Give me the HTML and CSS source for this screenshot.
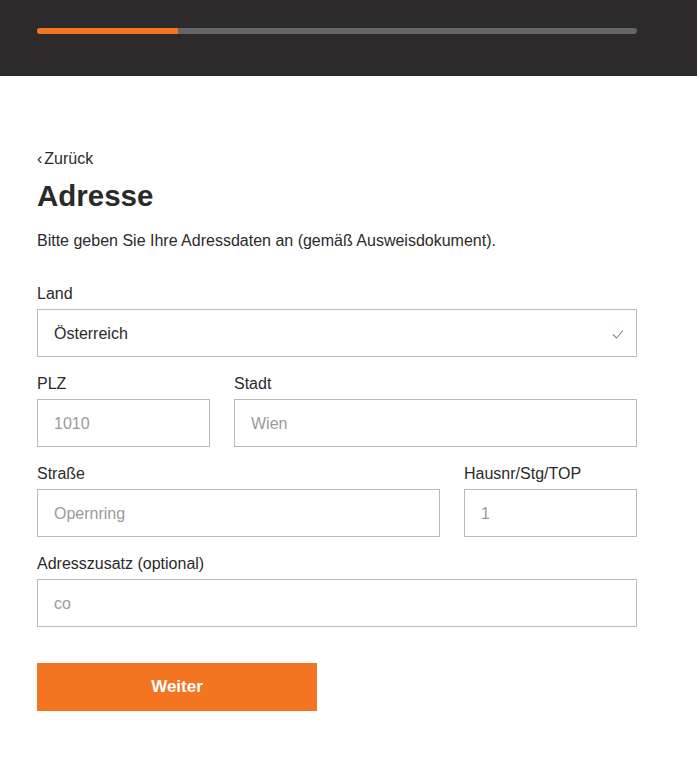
FILE: index.html
```html
<!DOCTYPE html>
<html lang="de">
<head>
<meta charset="utf-8">
<title>Adresse</title>
<link rel="stylesheet" href="styles.css">
</head>
<body>
<header class="topbar">
  <div class="progress"><div class="progress-fill" style="width:23.5%"></div></div>
</header>
<main class="content">
  <a class="back" href="#"><span class="chev">‹</span>Zurück</a>
  <h1 class="title">Adresse</h1>
  <p class="intro">Bitte geben Sie Ihre Adressdaten an (gemäß Ausweisdokument).</p>
  <form class="form">
    <div class="field">
      <label class="label">Land</label>
      <div class="input select">
        <span class="value">Österreich</span>
        <svg class="check" width="12" height="10" viewBox="0 0 12 10"><path d="M1 5.5 L4.5 9 L11 1.5" fill="none" stroke="#6a9a7a" stroke-width="1.1"/></svg>
      </div>
    </div>
    <div class="row row-a">
      <div class="field">
        <label class="label">PLZ</label>
        <div class="input"><span class="ph">1010</span></div>
      </div>
      <div class="field">
        <label class="label">Stadt</label>
        <div class="input"><span class="ph">Wien</span></div>
      </div>
    </div>
    <div class="row row-b">
      <div class="field">
        <label class="label">Straße</label>
        <div class="input"><span class="ph">Opernring</span></div>
      </div>
      <div class="field">
        <label class="label">Hausnr/Stg/TOP</label>
        <div class="input"><span class="ph">1</span></div>
      </div>
    </div>
    <div class="field">
      <label class="label">Adresszusatz (optional)</label>
      <div class="input"><span class="ph">co</span></div>
    </div>
    <button class="btn" type="button">Weiter</button>
  </form>
</main>
</body>
</html>
```

FILE: styles.css
```css
* { box-sizing: border-box; }
html, body { margin: 0; padding: 0; background: #fff; }
body {
  font-family: "Liberation Sans", Arial, sans-serif;
  color: #2b2a2b;
  width: 697px;
}
.topbar {
  background: #2c2a2b;
  height: 76px;
  padding: 28px 60px 0 37px;
}
.progress {
  height: 6px;
  background: #666566;
  border-radius: 3px;
  overflow: hidden;
}
.progress-fill {
  height: 100%;
  background: #f47521;
}
.content {
  padding: 73px 60px 0 37px;
}
.back {
  display: block;
  font-size: 16px;
  line-height: 20px;
  color: #2b2a2b;
  text-decoration: none;
}
.chev { font-size: 16px; margin-right: 2px; }
.title {
  margin: 10px 0 0;
  font-size: 29.5px;
  line-height: 34px;
  font-weight: bold;
  color: #2b2a2b;
}
.intro {
  margin: 18px 0 0;
  font-size: 16px;
  line-height: 20px;
}
.form {
  margin-top: 32px;
  display: flex;
  flex-direction: column;
  gap: 16px;
}
.field {
  display: flex;
  flex-direction: column;
  gap: 5px;
}
.label {
  font-size: 16px;
  line-height: 20px;
  padding-top: 1px;
}
.row {
  display: grid;
  column-gap: 24px;
}
.row-a { grid-template-columns: 173px 1fr; }
.row-b { grid-template-columns: 1fr 173px; }
.input {
  height: 48px;
  border: 1px solid #b9b9b9;
  display: flex;
  align-items: center;
  padding: 2px 16px 0;
  font-size: 16px;
}
.select { justify-content: space-between; padding-right: 12px; }
.value { color: #2b2a2b; }
.ph { color: #9a9a9a; }
.btn {
  margin-top: 20px;
  width: 280px;
  height: 48px;
  border: 0;
  background: #f47521;
  color: #fff;
  font-family: "Liberation Sans", Arial, sans-serif;
  font-size: 17px;
  font-weight: bold;
  cursor: pointer;
}
```
